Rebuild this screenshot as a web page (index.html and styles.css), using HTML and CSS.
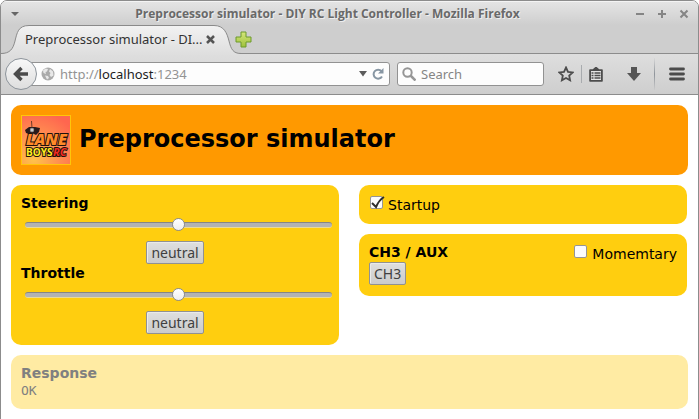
FILE: index.html
```html
<!DOCTYPE html>
<html lang="en">
<head>
<meta charset="utf-8">
<title>Preprocessor simulator - DIY RC Light Controller</title>
<link rel="stylesheet" href="styles.css">
</head>
<body>
<div class="window">
  <div class="chrome">
    <div class="titlebar">
      <button class="icon-btn" aria-label="Window menu"><svg width="10" height="6"><path d="M1 1h8L5 5z" fill="#666"/></svg></button>
      <div class="window-title">Preprocessor simulator - DIY RC Light Controller - Mozilla Firefox</div>
      <div class="window-controls">
        <button class="icon-btn" aria-label="Minimize"><svg width="10" height="10"><path d="M1 5h8" stroke="#858585" stroke-width="2"/></svg></button>
        <button class="icon-btn" aria-label="Maximize"><svg width="10" height="10"><path d="M1 5h8M5 1v8" stroke="#858585" stroke-width="2"/></svg></button>
        <button class="icon-btn" aria-label="Close"><svg width="10" height="10"><path d="M1.500 1.500l7 7M8.500 1.500l-7 7" stroke="#858585" stroke-width="2"/></svg></button>
      </div>
    </div>
    <div class="tabstrip">
      <div class="tab">
        <svg class="tab-shape" width="240" height="30">
          <defs><linearGradient id="tabfill" x1="0" y1="0" x2="0" y2="1"><stop offset="0" stop-color="#f2f2f2"/><stop offset="1" stop-color="#dedede"/></linearGradient></defs>
          <path d="M0 30V28.500C9 28.500 12 24 14 16S17 .5 28 .5H213C223 .5 226 8 228 16S232 28.500 240 28.500V30z" fill="url(#tabfill)"/>
          <path d="M0 28.500C9 28.500 12 24 14 16S17 .5 28 .5H213C223 .5 226 8 228 16S232 28.500 240 28.500" fill="none" stroke="#8a8a8a"/>
        </svg>
        <span class="tab-label">Preprocessor simulator - DI...</span>
        <button class="icon-btn" aria-label="Close tab"><svg width="9" height="9"><path d="M1 1l7 7M8 1l-7 7" stroke="#555" stroke-width="2.500"/></svg></button>
      </div>
      <button class="icon-btn" aria-label="New tab"><svg width="17" height="17"><defs><linearGradient id="plus" x1="0" y1="0" x2="0" y2="1"><stop offset="0" stop-color="#d5e77b"/><stop offset="1" stop-color="#9fc13c"/></linearGradient></defs><path d="M6 1h5v5h5v5h-5v5H6v-5H1V6h5z" fill="url(#plus)" stroke="#6c9a2d" stroke-linejoin="round"/></svg></button>
    </div>
    <div class="toolbar">
      <button class="back" aria-label="Back"><svg width="16" height="16"><path d="M15 8H4M8.500 2L2.500 8l6 6" fill="none" stroke="#4b4b4b" stroke-width="3.400"/></svg></button>
      <div class="field address">
        <svg width="14" height="14"><circle cx="7" cy="7" r="6.500" fill="#aaa"/><path d="M2 3.500L4.500 1.500 7 2 6 4.500 4.500 5 5 7 2.500 6zM9 2l3 2.500.5 4L10 10 8.500 8 9.500 6 8 4.500zM4 8.500l3 .5 1 2-2 1.500z" fill="#e8e8e8"/></svg>
        <div class="url"><span class="dim">http://</span>localhost<span class="dim">:1234</span></div>
        <button class="icon-btn" aria-label="History"><svg width="8" height="6"><path d="M0 0h8L4 5.500z" fill="#5c5c5c"/></svg></button>
        <button class="icon-btn" aria-label="Reload"><svg width="12" height="12"><path d="M9.500 3.200A4.500 4.500 0 1 0 10 8.500" fill="none" stroke="#8796a3" stroke-width="2"/><path d="M11.500 0v5.500H6z" fill="#8796a3"/></svg></button>
      </div>
      <div class="field search">
        <svg width="14" height="14"><circle cx="5.500" cy="5.500" r="4.200" fill="none" stroke="#969696" stroke-width="2"/><path d="M8.500 8.500l5 5" stroke="#969696" stroke-width="2.500"/></svg>
        <input type="text" placeholder="Search" aria-label="Search">
      </div>
      <div class="tools">
        <button class="icon-btn" aria-label="Bookmark"><svg width="16" height="16"><path d="M8 1.500l2 4.300 4.700.6-3.500 3.200.9 4.700L8 12l-4.100 2.300.9-4.700L1.300 6.400 6 5.800z" fill="none" stroke="#4d4d4d" stroke-width="1.800"/></svg></button>
        <span class="sep short"></span>
        <button class="icon-btn" aria-label="Bookmarks list"><svg width="14" height="15"><path d="M1 3h3l3-2.500L10 3h3v11H1z" fill="#4d4d4d" stroke="#4d4d4d" stroke-width="1.600" stroke-linejoin="round"/><path d="M2 4h10v9H2z" fill="#e4e4e4"/><path d="M2.500 6h2M5.500 6h6M2.500 8.500h2M5.500 8.500h6M2.500 11h2M5.500 11h6" stroke="#4d4d4d" stroke-width="1.400"/></svg></button>
        <button class="icon-btn download" aria-label="Downloads"><svg width="14" height="14"><path d="M4 0h6v6h4l-7 8-7-8h4z" fill="#555"/></svg></button>
        <span class="sep"></span>
        <button class="icon-btn" aria-label="Menu"><svg width="16" height="14"><path d="M1.500 2h13M1.500 7h13M1.500 12h13" stroke="#4b4b4b" stroke-width="2.800" stroke-linecap="round"/></svg></button>
      </div>
    </div>
  </div>
  <main class="page">
    <header class="banner">
      <svg class="logo" viewBox="0 0 50 50" role="img" aria-label="Lane Boys RC">
        <defs><radialGradient id="glow" cx=".25" cy=".9" r="1"><stop offset="0" stop-color="#ffc34a"/><stop offset=".5" stop-color="#ff9151"/><stop offset="1" stop-color="#ff664f"/></radialGradient></defs>
        <rect x=".5" y=".5" width="49" height="49" fill="url(#glow)" stroke="#ffc60a"/>
        <path d="M10.500 6l.5 7" stroke="#4a2b20" stroke-width=".8"/>
        <path d="M4 15l4-3h6l5 1-1 4-3 3-4-2-3 1-3-1z" fill="#2a1b1b"/>
        <circle cx="11" cy="15" r="2.200" fill="#999"/><circle cx="11" cy="15" r="1" fill="#ddd"/>
        <g class="logo-text">
          <text class="logo-lane" x="5" y="30">LANE</text>
          <text class="logo-boys" x="5" y="41">BOYS</text>
          <text class="logo-rc" x="32" y="41">RC</text>
        </g>
      </svg>
      <h1>Preprocessor simulator</h1>
    </header>
    <div class="columns">
      <section class="card controls">
        <label for="steering">Steering</label>
        <input id="steering" type="range" min="-100" max="100" value="0">
        <button class="btn">neutral</button>
        <label for="throttle">Throttle</label>
        <input id="throttle" type="range" min="-100" max="100" value="0">
        <button class="btn">neutral</button>
      </section>
      <div class="stack">
        <section class="card startup">
          <label class="check"><input type="checkbox" checked><svg class="tick" width="16" height="14"><path d="M2 7l4 4Q9 4 14 1" fill="none" stroke="#2d2d2d" stroke-width="2"/></svg><span>Startup</span></label>
        </section>
        <section class="card aux">
          <div><h2>CH3 / AUX</h2><button class="btn">CH3</button></div>
          <label class="check momentary"><input type="checkbox"><span>Momemtary</span></label>
        </section>
      </div>
    </div>
    <section class="card response">
      <h2>Response</h2>
      <output>OK</output>
    </section>
  </main>
</div>
</body>
</html>
```
FILE: styles.css
```css
* { box-sizing: border-box; }
body {
  margin: 0;
  background: #fff;
  color: #000;
  font: 14px/18px "DejaVu Sans", sans-serif;
}
h1, h2 { margin: 0; }
h2 { font-size: 14px; line-height: 18px; }
svg { display: block; flex: none; }
button, input { font: inherit; margin: 0; }

.window {
  min-height: 100vh;
  border: 1px solid #8c8c8c;
  border-radius: 7px 7px 0 0;
  overflow: hidden;
}
.chrome {
  font: 13px/18px "Noto Sans", "Open Sans", sans-serif;
  background: #cecece;
  border-bottom: 1px solid #8c8c8c;
}
.icon-btn { padding: 0; border: 0; background: none; }

.titlebar {
  display: flex;
  align-items: center;
  height: 24px;
  padding: 0 9px;
  border-top: 1px solid #f4f4f4;
  background: linear-gradient(#e4e4e4, #cecece);
}
.window-title {
  flex: 1;
  text-align: center;
  font-family: "Open Sans", sans-serif;
  font-size: 12px;
  font-weight: 700;
  color: #696969;
  text-shadow: 1px 1px #eee;
}
.window-controls { display: flex; gap: 12px; }

.tabstrip {
  display: flex;
  align-items: center;
  height: 29px;
  border-bottom: 1px solid #8c8c8c;
}
.tab {
  position: relative;
  display: flex;
  align-items: center;
  gap: 8px;
  width: 234px;
  height: 29px;
  padding-left: 24px;
  color: #333;
}
.tab-shape { position: absolute; left: 0; top: 0; }
.tab-label, .tab .icon-btn { position: relative; }
.tab-label { width: 173px; white-space: nowrap; }

.toolbar {
  display: flex;
  align-items: center;
  height: 40px;
  padding: 0 13px 0 4px;
  background: linear-gradient(#dedede, #cecece);
}
.back {
  position: relative;
  display: flex;
  align-items: center;
  justify-content: center;
  width: 32px;
  height: 32px;
  padding: 0;
  border: 1px solid #8d949b;
  border-radius: 50%;
  background: linear-gradient(#f8f8f8, #dedede);
}
.field {
  display: flex;
  align-items: center;
  height: 24px;
  border: 1px solid #929292;
  border-radius: 3px;
  background: #fdfdfd;
}
.address {
  flex: 1;
  margin-left: -10px;
  padding: 0 5px 0 13px;
  gap: 5px;
}
.url { flex: 1; color: #1d1d1d; }
.dim { color: #939393; }
.search { width: 147px; margin-left: 7px; padding-left: 4px; gap: 5px; }
.search input {
  width: 100%;
  min-width: 0;
  padding: 0;
  border: 0;
  outline: 0;
  background: none;
}
.search input::placeholder { color: #858585; }
.tools { display: flex; align-items: center; gap: 7px; padding-left: 14px; }
.sep { width: 1px; height: 32px; background: linear-gradient(#d8d8d8, #8e949a, #ccc); }
.sep.short { height: 18px; background: #a8abae; }
.download { margin: 0 6px 0 17px; }
.tools .icon-btn:last-child { margin-left: 7px; }

.page { padding: 10px; }
.banner {
  display: flex;
  align-items: center;
  gap: 8px;
  padding: 10px;
  border-radius: 10px;
  background: #ff9900;
}
.logo { width: 50px; height: 50px; }
.logo-text {
  font-family: "Open Sans", sans-serif;
  font-weight: 700;
  paint-order: stroke;
  stroke: #20120c;
  stroke-width: 2px;
}
.logo-lane { font-size: 16px; font-weight: 800; font-style: italic; fill: #ff8a28; }
.logo-boys { font-size: 10px; fill: #ffee20; }
.logo-rc { font-size: 11px; font-style: italic; fill: #f52a20; }
h1 { font-size: 24px; line-height: 28px; padding-bottom: 2px; }

.columns {
  display: grid;
  grid-template-columns: 1fr 1fr;
  align-items: start;
  gap: 20px;
  margin: 10px 0;
  padding-right: 1px;
}
.card { padding: 9px 10px; border-radius: 10px; background: #ffce0f; }
.stack { display: flex; flex-direction: column; gap: 10px; }
.controls {
  display: flex;
  flex-direction: column;
  padding-bottom: 11px;
}
.controls label { font-weight: 700; }
.controls .btn { align-self: center; margin-top: 6px; }

input[type="range"] {
  appearance: none;
  width: auto;
  height: 20px;
  margin: 3px -3px 0 4px;
  background: none;
}
input[type="range"]::-webkit-slider-runnable-track {
  height: 6px;
  border-top: 1px solid #858585;
  border-bottom: 1px solid #eadb98;
  border-radius: 3px;
  background: #b3b3b3;
}
input[type="range"]::-webkit-slider-thumb {
  appearance: none;
  width: 13px;
  height: 13px;
  margin-top: -5px;
  border: 1px solid #8c8c8c;
  border-radius: 50%;
  background: linear-gradient(#fff, #eee);
}
.btn {
  display: block;
  height: 23px;
  padding: 0 4px;
  border: 1px solid #919191;
  border-radius: 2px;
  background: linear-gradient(#dfdfdf, #cbcbcb);
  box-shadow: inset 1px 1px #eaeaea;
  color: #404040;
  font: 14px/20px "Noto Sans", "Open Sans", sans-serif;
}
.aux .btn { margin-top: 1px; }

.check { position: relative; display: flex; gap: 5px; }
.check input {
  appearance: none;
  width: 13px;
  height: 13px;
  margin-top: 1px;
  border: 1px solid #959595;
  border-radius: 2px;
  background: #fcfcfc;
}
.check span { padding-top: 1px; }
.tick { position: absolute; left: 0; top: 1px; }
.startup { padding: 10px 11px; }
.aux { display: flex; justify-content: space-between; padding-bottom: 11px; }
.momentary { padding-top: 1px; }

.response { background: #ffeba3; color: #808080; }
.response output {
  display: block;
  font: 13px/18px "DejaVu Sans Mono", monospace;
}
```
